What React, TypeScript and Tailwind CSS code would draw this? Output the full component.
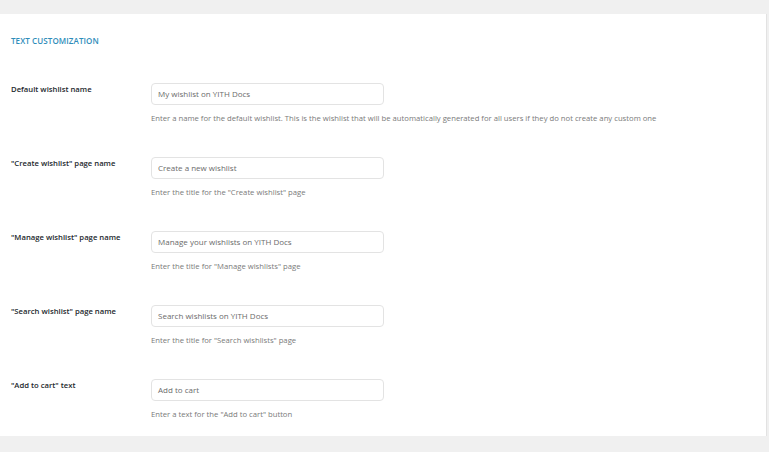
import React from "react";

const rows = [
  {
    label: "Default wishlist name",
    value: "My wishlist on YITH Docs",
    desc: "Enter a name for the default wishlist. This is the wishlist that will be automatically generated for all users if they do not create any custom one",
  },
  {
    label: "\"Create wishlist\" page name",
    value: "Create a new wishlist",
    desc: "Enter the title for the \"Create wishlist\" page",
  },
  {
    label: "\"Manage wishlist\" page name",
    value: "Manage your wishlists on YITH Docs",
    desc: "Enter the title for \"Manage wishlists\" page",
  },
  {
    label: "\"Search wishlist\" page name",
    value: "Search wishlists on YITH Docs",
    desc: "Enter the title for \"Search wishlists\" page",
  },
  {
    label: "\"Add to cart\" text",
    value: "Add to cart",
    desc: "Enter a text for the \"Add to cart\" button",
  },
];

export default function App() {
  return (
    <div
      className="w-[769px] h-[452px] bg-[#f0f0f0] pt-[14px] overflow-hidden"
      style={{ fontFamily: '"Open Sans", "Noto Sans", sans-serif' }}
    >
      <div className="w-[767px] h-[422px] bg-white border-r border-[#e2e2e2] pl-[11px]">
        <div className="pt-[22px] h-[69px] text-[8px] leading-[10px] font-semibold text-[#2f8dba] tracking-[0.1px]">
          TEXT CUSTOMIZATION
        </div>
        {rows.map((r) => (
          <div key={r.label} className="flex h-[74px]">
            <div className="w-[140px] pt-[1px] text-[7.7px] leading-[10px] font-semibold text-[#23282d]">
              {r.label}
            </div>
            <div className="flex flex-col">
              <div className="w-[233px] h-[22px] border border-[#e3e3e3] rounded-[4px] flex items-center pl-[6px] text-[8px] text-[#6b6b6b]">
                {r.value}
              </div>
              <div className="mt-[8px] text-[7.7px] leading-[10px] text-[#7a7a7a] whitespace-nowrap">
                {r.desc}
              </div>
            </div>
          </div>
        ))}
      </div>
    </div>
  );
}
